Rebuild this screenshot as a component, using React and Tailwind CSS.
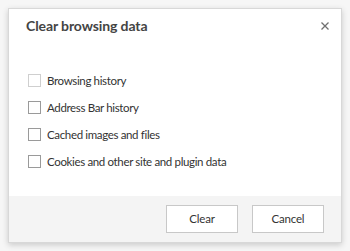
export default function App() {
  const items = [
    "Browsing history",
    "Address Bar history",
    "Cached images and files",
    "Cookies and other site and plugin data",
  ];
  return (
    <div
      className="w-[350px] h-[251px] bg-[#f6f6f6] pt-[8px] pl-[8px]"
      style={{ fontFamily: 'Lato, "Open Sans", sans-serif' }}
    >
      <div className="w-[334px] h-[235px] bg-white border border-[#d8d8d8] shadow-[0_2px_6px_rgba(0,0,0,0.18)] flex flex-col">
        <div className="flex items-center justify-between h-[16px] mt-[9px] pl-[17px] pr-[12px]">
          <span className="text-[14px] leading-[16px] font-bold tracking-[-0.1px] text-[#444]">
            Clear browsing data
          </span>
          <svg width="8" height="8" viewBox="0 0 8 8">
            <path d="M0.5 0.5L7.5 7.5M7.5 0.5L0.5 7.5" stroke="#707070" strokeWidth="1.3" />
          </svg>
        </div>
        <div className="flex flex-col gap-[14px] pl-[19px] pt-[40px]">
          {items.map((t, i) => (
            <label key={t} className="flex items-center gap-[6px] h-[13px]">
              <span
                className={
                  "w-[13px] h-[13px] border bg-white shrink-0 " +
                  (i === 0 ? "border-[#cfcfcf]" : "border-[#9a9a9a]")
                }
              />
              <span className="text-[11.5px] leading-[13px] tracking-[-0.35px] text-[#333]">{t}</span>
            </label>
          ))}
        </div>
        <div className="mt-auto h-[46px] bg-[#f4f4f4] flex items-center justify-end gap-[14px] pr-[17px]">
          <button className="w-[72px] h-[28px] bg-white border border-[#c8c8c8] text-[11.5px] tracking-[-0.2px] text-[#333]">
            Clear
          </button>
          <button className="w-[72px] h-[28px] bg-white border border-[#c8c8c8] text-[11.5px] tracking-[-0.2px] text-[#333]">
            Cancel
          </button>
        </div>
      </div>
    </div>
  );
}
